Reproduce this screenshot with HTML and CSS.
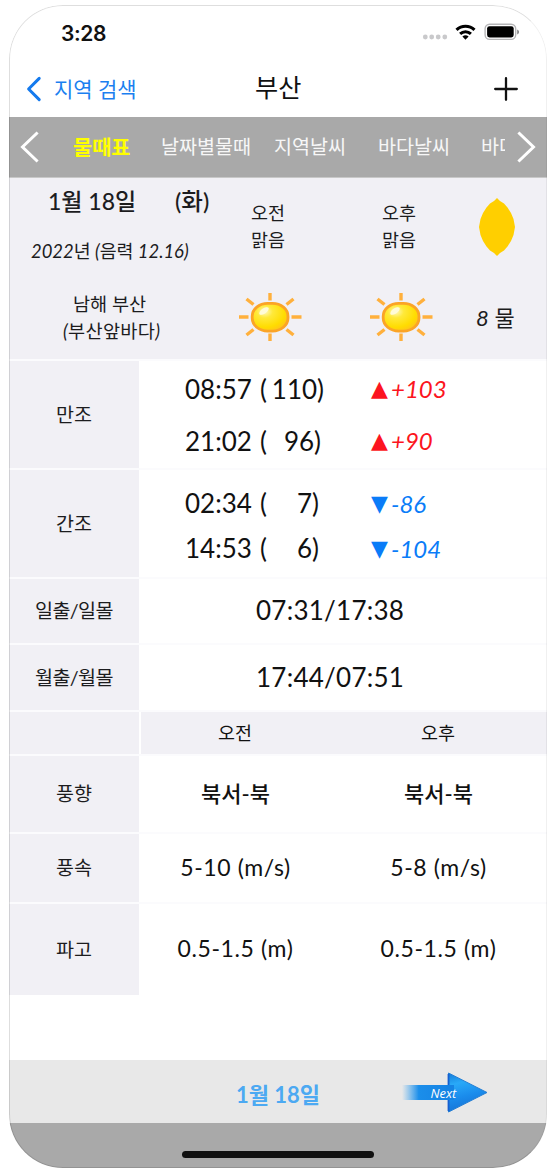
FILE: index.html
```html
<!DOCTYPE html>
<html lang="ko">
<head>
<meta charset="utf-8">
<title>부산 물때표</title>
<link rel="stylesheet" href="styles.css">
</head>
<body>
<svg class="defs" width="0" height="0" aria-hidden="true">
  <defs>
    <radialGradient id="sunFill" cx="0.35" cy="0.3" r="0.75">
      <stop offset="0" stop-color="#fff9c0"/>
      <stop offset="0.3" stop-color="#ffe93a"/>
      <stop offset="0.75" stop-color="#ffdc00"/>
      <stop offset="1" stop-color="#ffc31c"/>
    </radialGradient>
    <symbol id="sun" viewBox="0 0 64 50">
      <g stroke="#ffb03c" stroke-width="3.4">
        <path d="M32 1v7.500M32 41.500v7.500M1 25h9.500M53.500 25h10M8.500 7l7 5.5M55.500 7l-7 5.5M8.500 43l7-5.5M55.500 43l-7-5.5"/>
      </g>
      <rect x="14.2" y="11.3" width="35.800" height="27.800" rx="15.500" ry="13" fill="url(#sunFill)" stroke="#fba426" stroke-width="2.800"/>
      <ellipse cx="26" cy="19" rx="5.5" ry="2.6" fill="#fffbd8" transform="rotate(-35 26 19)"/>
    </symbol>
  </defs>
</svg>
<div class="phone">
  <div class="status">
    <span class="clock">3:28</span>
    <svg class="status-icons" width="98" height="18" viewBox="0 0 98 18">
      <g fill="#c9c9cb"><circle cx="4.3" cy="14" r="2.4"/><circle cx="10.7" cy="14" r="2.4"/><circle cx="17.2" cy="14" r="2.4"/><circle cx="23.8" cy="14" r="2.4"/></g>
      <g fill="none" stroke="#000" stroke-width="3.100">
        <path d="M35.500 6.8a13.2 13.2 0 0 1 18 0"/>
        <path d="M39.100 10.9a8 8 0 0 1 10.8 0"/>
      </g>
      <path d="M44.500 16.8l-3.1-3.2a4.5 4.5 0 0 1 6.2 0z"/>
      <rect x="64.1" y="1.2" width="30.6" height="15.2" rx="4.6" fill="#fff" stroke="#b5b5b7" stroke-width="1.4"/>
      <rect x="66.1" y="3.2" width="26.6" height="11.2" rx="2.4"/>
      <path d="M96.1 6.6q2 .7 2 2.4t-2 2.4z" fill="#8e8e90"/>
    </svg>
  </div>

  <div class="nav">
    <svg class="nav-back" width="16" height="26" viewBox="0 0 16 26"><path d="M13.2 2.4L2.6 13l10.6 10.6" fill="none" stroke="#147aee" stroke-width="3" stroke-linecap="round" stroke-linejoin="round"/></svg>
    <span class="nav-link">지역 검색</span>
    <span class="nav-title">부산</span>
    <svg class="nav-add" width="24" height="24" viewBox="0 0 24 24"><path d="M12 1.2v21.600M1.2 12h21.600" stroke="#111" stroke-width="2.3" stroke-linecap="round"/></svg>
  </div>

  <div class="tabs">
    <svg class="tab-prev" width="20" height="32" viewBox="0 0 20 32"><path d="M17.6 1.5L2.5 16l15.1 14.5" fill="none" stroke="#fff" stroke-width="3"/></svg>
    <div class="tab-list">
      <span class="tab tab-active">물때표</span>
      <span class="tab tab-date">날짜별물때</span>
      <span class="tab tab-local">지역날씨</span>
      <span class="tab tab-sea">바다날씨</span>
      <span class="tab tab-cut">바다</span>
    </div>
    <svg class="tab-next" width="20" height="32" viewBox="0 0 20 32"><path d="M2.4 1.5L17.5 16L2.4 30.5" fill="none" stroke="#fff" stroke-width="3"/></svg>
  </div>

  <div class="summary">
    <div class="place">
      <div class="date"><span class="day">1월 18일</span><span class="weekday">(화)</span></div>
      <div class="lunar"><i>2022</i>년<i> (</i>음력<i> 12.16)</i></div>
      <div class="area">남해 부산</div>
      <div class="area area-sub"><i>(</i>부산앞바다<i>)</i></div>
    </div>
    <div class="sky">
      <div>오전</div><div>맑음</div>
      <svg class="sun" width="64" height="50"><use href="#sun"/></svg>
    </div>
    <div class="sky sky-pm">
      <div>오후</div><div>맑음</div>
      <svg class="sun" width="64" height="50"><use href="#sun"/></svg>
    </div>
    <div class="moon">
      <svg width="38" height="60" viewBox="0 0 38 60"><path d="M19 1l3 3 4 2.500 3.500 4L33 16l2.500 6 1.500 8-1.500 8-2.500 6-3.500 5.500-3.500 4-4 2.500-3 3-3-3-4-2.500-3.500-4L5 44l-2.500-6L1 30l1.500-8L5 16l3.500-5.500L12 6.500 16 4z" fill="#ffcf00"/></svg>
      <div class="phase"><i>8</i> 물</div>
    </div>
  </div>

  <div class="table">
    <div class="row high">
      <div class="label">만조</div>
      <div class="tides">
        <div class="tide"><span class="time">08:57</span><span class="open">(</span><span class="level level-full">110)</span><span class="delta up"><span class="mark">▲</span><i>+103</i></span></div>
        <div class="tide"><span class="time">21:02</span><span class="open">(</span><span class="level">96)</span><span class="delta up"><span class="mark">▲</span><i>+90</i></span></div>
      </div>
    </div>
    <div class="row low">
      <div class="label">간조</div>
      <div class="tides">
        <div class="tide"><span class="time">02:34</span><span class="open">(</span><span class="level level-single">7)</span><span class="delta down"><span class="mark">▼</span><i>-86</i></span></div>
        <div class="tide"><span class="time">14:53</span><span class="open">(</span><span class="level level-single">6)</span><span class="delta down"><span class="mark">▼</span><i>-104</i></span></div>
      </div>
    </div>
    <div class="row sunrise"><div class="label label-slash">일출/일몰</div><div class="rise">07:31/17:38</div></div>
    <div class="row moonrise"><div class="label label-slash">월출/월몰</div><div class="rise">17:44/07:51</div></div>
    <div class="row heads"><div class="label"></div><div class="pair pair-head"><span>오전</span><span>오후</span></div></div>
    <div class="row wind-dir"><div class="label">풍향</div><div class="pair pair-dir"><span>북서-북</span><span>북서-북</span></div></div>
    <div class="row wind-speed"><div class="label">풍속</div><div class="pair"><span>5-10 (m/s)</span><span>5-8 (m/s)</span></div></div>
    <div class="row wave"><div class="label">파고</div><div class="pair"><span>0.5-1.5 (m)</span><span>0.5-1.5 (m)</span></div></div>
  </div>

  <div class="pager">
    <span class="pager-date">1월 18일</span>
    <svg class="next" width="90" height="46" viewBox="0 0 90 46">
      <defs>
        <linearGradient id="shaft" x1="0" x2="1"><stop offset="0" stop-color="#2b9ff5" stop-opacity="0"/><stop offset="0.35" stop-color="#1b8eea"/><stop offset="1" stop-color="#1583e4"/></linearGradient>
        <linearGradient id="head" x1="0" y1="0" x2="0.25" y2="1"><stop offset="0" stop-color="#137bd9"/><stop offset="0.3" stop-color="#29a9f8"/><stop offset="0.65" stop-color="#1a8cec"/><stop offset="1" stop-color="#1674d6"/></linearGradient>
      </defs>
      <rect x="0" y="16" width="48" height="15" fill="url(#shaft)"/>
      <path d="M46.500 4L85 23.500L46.500 43z" fill="url(#head)" stroke="#257fd4" stroke-width="1" stroke-linejoin="round"/>
      <path d="M46.500 5v11M46.500 31v11" stroke="#155fd0" stroke-width="1.800"/>
      <rect x="44" y="16" width="8" height="15" fill="#1583e4"/>
      <text x="28.500" y="28.500" class="next-text">Next</text>
    </svg>
  </div>
  <div class="home"><div class="home-bar"></div></div>
</div>
</body>
</html>
```
FILE: styles.css
```css
* { box-sizing: border-box; }
body {
  margin: 0;
  padding: 5px 0 0 9px;
  background: #fff;
  color: #1c1c1e;
  font-family: Lato, "Noto Sans CJK KR", sans-serif;
}
.defs { display: block; height: 0; }
.phone {
  position: relative;
  width: 538px;
  height: 1163px;
  border-radius: 54px;
  overflow: hidden;
  background: #fff;
  display: flex;
  flex-direction: column;
}
.phone > div { flex-shrink: 0; }
/* device outline over the screen content */
.phone::after {
  content: "";
  position: absolute;
  inset: 0;
  border: 1px solid rgba(0, 0, 0, 0.13);
  border-right-color: rgba(0, 0, 0, 0.06);
  border-radius: 54px;
}
svg { display: block; flex: none; }
span { white-space: nowrap; }

.status {
  height: 52px;
  display: flex;
  padding: 18px 28px 0 52px;
  justify-content: space-between;
}
.clock {
  font: 600 21px/22px Inter, sans-serif;
  letter-spacing: -0.4px;
  color: #111;
}

.nav {
  height: 60px;
  display: flex;
  align-items: center;
  padding: 3px 29px 0 17px;
}
.nav-link { width: 201px; margin: -2px 0 0 12px; font-size: 21px; color: #1b7ff0; }
.nav-title { margin-top: -6px; font-size: 25.2px; color: #111; }
.nav-add { margin-left: auto; }

.tabs {
  height: 61px;
  display: flex;
  align-items: center;
  padding: 0 11px;
  background: #a9a9a9;
  border-bottom: 1px solid #c8c8c8;
}
.tab-list { flex: 1; display: flex; overflow: hidden; margin-left: 33px; margin-right: 11px; }
.tab { flex: none; font-size: 19.6px; line-height: 28px; color: #f7f7f7; }
.tab-active { width: 88px; font-weight: 700; font-size: 20.8px; color: #ff0; }
.tab-date { width: 113px; }
.tab-local { width: 104px; }
.tab-sea { width: 103px; }

.summary {
  height: 181px;
  display: flex;
  background: #f1f0f5;
}
.place { width: 229px; }
.date { height: 47px; display: flex; padding-left: 39px; font-size: 23px; line-height: 47px; font-weight: 500; }
.day { width: 127px; }
.weekday { font-size: 23.5px; }
.lunar { height: 53px; line-height: 53px; padding-left: 22px; font-size: 18.4px; }
.area { height: 27px; line-height: 27px; padding-left: 64px; margin-top: 13px; font-size: 18.6px; }
.area-sub { padding-left: 54px; margin-top: 0; letter-spacing: 0.3px; }
.sky { width: 131px; padding-top: 22px; font-size: 18.5px; line-height: 27px; }
.sky > div { padding-left: 13px; }
.sky > .sun { margin-top: 38px; }
.moon { padding-top: 19px; }
.moon svg { margin-left: -22px; }
.phase { margin: 47px 0 0 -24px; font-size: 22px; line-height: 28px; }

.table { flex: 1; background: #fff; }
.row { display: flex; border-top: 2px solid #fbfbfd; }
.label {
  width: 130px;
  flex: none;
  background: #f1f0f5;
  display: flex;
  align-items: center;
  justify-content: center;
  padding-bottom: 3px;
  font-size: 19.6px;
}
.label-slash { letter-spacing: -0.6px; }
.high { height: 109px; }
.low { height: 109px; }
.sunrise { height: 66px; }
.moonrise { height: 67px; }
.heads { height: 44px; }
.wind-dir { height: 78px; }
.wind-speed { height: 70px; }
.wave { height: 93px; }

.tides { padding-left: 46px; color: #111; }
.high .tides { padding-top: 2px; }
.low .tides { padding-top: 11px; }
.tide { display: flex; font-size: 26px; }
.high .tide { height: 52px; line-height: 52px; }
.low .tide { height: 45px; line-height: 45px; }
.time { width: 75px; }
.open { width: 10px; }
.level { width: 54px; padding-right: 3px; text-align: right; }
.level-full { padding-right: 0; }
.level-single { padding-right: 5px; }
.delta { display: flex; margin-left: 47px; font-size: 24px; }
.mark { width: 20px; font: 22px/1 "DejaVu Sans", sans-serif; line-height: inherit; }
.up { color: #fc1420; }
.down { color: #0a7cf8; }

.rise { flex: 1; display: flex; align-items: center; padding: 0 0 2px 117px; font-size: 26px; letter-spacing: 0.25px; color: #111; }
.pair { flex: 1; display: flex; padding-bottom: 3px; font-size: 23px; letter-spacing: 0.6px; color: #111; }
.pair span { width: 213px; display: flex; align-items: center; justify-content: center; }
.pair span:first-child { width: 193px; }
.pair-head { margin-left: 2px; padding-right: 2px; background: #f1f0f5; font-size: 18.5px; letter-spacing: 0; }
.pair-head span:first-child { width: 188px; }
.pair-head span:last-child { width: 218px; }
.pair-dir { padding-bottom: 5px; font-size: 22px; letter-spacing: 0; font-weight: 500; }

.pager {
  height: 63px;
  background: #e8e8e8;
  display: flex;
  align-items: center;
  padding-left: 227px;
}
.pager-date { width: 166px; padding-top: 3px; font-size: 22px; font-weight: 700; color: #4ca9f2; }
.next-text { font: italic 12.8px "Open Sans", sans-serif; fill: #fff; }
.home { height: 45px; background: #a9a9a9; padding: 28px 0 0 173px; }
.home-bar { width: 192px; height: 7px; border-radius: 4px; background: #111; }
```
